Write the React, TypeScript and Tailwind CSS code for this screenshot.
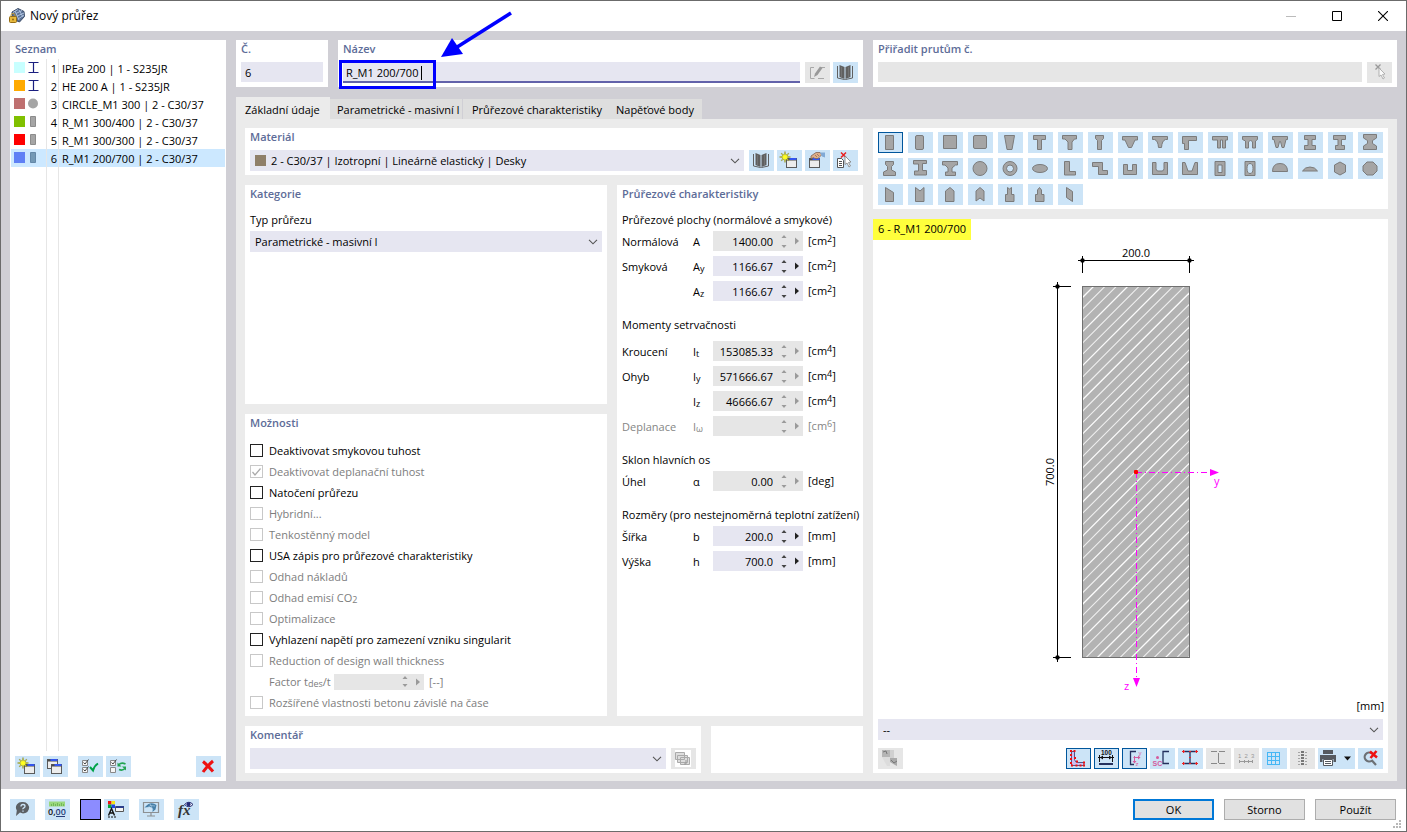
import React, { useId } from "react";
import type { ReactNode } from "react";

const G = { fill: "#a5a5a5", stroke: "#7b7b7b", strokeWidth: 1 };

const SHAPES: { name: string; d: string; evenOdd?: boolean }[] = [
  { name: "Obdélník", d: "M7.5 3.5h8v14h-8z" },
  { name: "Zaoblený obdélník", d: "M9 3.5h5q1.500 0 1.500 1.500v11q0 1.500-1.500 1.500h-5q-1.500 0-1.500-1.500v-11q0-1.500 1.500-1.500z" },
  { name: "Čtverec", d: "M5.500 3.500h13v13h-13z" },
  { name: "Zaoblený čtverec", d: "M7 3.500h10q1.500 0 1.500 1.500v10q0 1.500-1.500 1.500h-10q-1.500 0-1.500-1.500v-10q0-1.500 1.500-1.500z" },
  { name: "Lichoběžník", d: "M6.500 3.500h10l-2.500 14h-5z" },
  { name: "T průřez", d: "M5.500 3.500h12v4h-4v10h-4v-10h-4z" },
  { name: "T s náběhem", d: "M4.500 3.500h14v3.500h-2l-2.500 3v7.500h-4v-7.500l-3-3h-2.500z" },
  { name: "T úzký", d: "M7.500 3.500h8v3l-2 2v9h-4v-9l-2-2z" },
  { name: "T zkosený", d: "M4.500 4.500h15v3.500h-2.500l-3.500 7.500h-3l-3.500-7.500h-2.500z" },
  { name: "T zaoblený", d: "M4.500 4.500h15v3h-2q-3.500 1-4 8h-3q-.5-7-4-8h-2z" },
  { name: "L obrácený", d: "M4.500 4.500h14v4h-8v9h-4v-6h-2z" },
  { name: "TT", d: "M4.500 4.500h15v3.500h-2v8h-3v-8h-2v8h-3v-8h-5z" },
  { name: "TT s náběhem", d: "M4.500 4.500h15v3l-2 1.500v7h-3v-6l-2-2-2 2v6h-3v-7l-3-1.500z" },
  { name: "TT zkosený", d: "M4.500 4.500h15v3h-1.500l-2 8h-2l-1.500-6h-1l-1.500 6h-2l-2-8h-1.500z" },
  { name: "I průřez", d: "M6.500 3.500h11v4h-3.500v6h3.500v4h-11v-4h3.500v-6h-3.500z" },
  { name: "I nesymetrický", d: "M5.500 3.500h12v4h-4v6h3v4h-9v-4h2.500v-6h-4.500z" },
  { name: "I s náběhy", d: "M5.500 2.500h13v3.500l-4 2.500v3l4 2.500v3.500h-13v-3.500l4-2.500v-3l-4-2.500z" },
  { name: "I úzký nahoře", d: "M7.500 3.500h8v3l-2 2v3.500l4 2v3.500h-12v-3.500l4-2v-3.500l-2-2z" },
  { name: "I posunutý", d: "M5.500 2.500h13v3h-4v7h4v4.500h-12v-4h4v-7h-5z" },
  { name: "I s horním náběhem", d: "M4.500 3.500h15v3.500h-2l-3.500 3v4h3.500v3.500h-10v-3.500h2.500v-4l-3-3h-2.500z" },
  { name: "Kruh", d: "M5 10.500a7 7 0 1 1 14 0a7 7 0 1 1-14 0z" },
  { name: "Trubka", d: "M5 10.500a7 7 0 1 1 14 0a7 7 0 1 1-14 0zM8.500 10.500a3.500 3.500 0 1 0 7 0a3.500 3.500 0 1 0-7 0z", evenOdd: true },
  { name: "Elipsa", d: "M4.500 10.500a7.500 4 0 1 1 15 0a7.500 4 0 1 1-15 0z" },
  { name: "L průřez", d: "M6.500 3.500h5v10h6v3.500h-11z" },
  { name: "Z průřez", d: "M4.500 4.500h10v8h5v4h-9v-8h-6z" },
  { name: "U průřez", d: "M5.500 6.500h4v6h5v-6h4v10h-13z" },
  { name: "U zaoblený", d: "M4.500 4.500h3.500v6q0 2.500 2 2.500h4q2 0 2-2.500v-6h3.500v12h-15z" },
  { name: "U zkosený", d: "M4.500 4.500h2.500l3 8.500h4l3-8.500h2.500v12h-15z" },
  { name: "Dutý obdélník", d: "M7 3.500h10v14h-10zM10 7v7.500h4v-7.500z", evenOdd: true },
  { name: "Obdélník s otvorem", d: "M7 3.500h10v14h-10zM12 5.500q-3 0-3 5t3 5t3-5t-3-5z", evenOdd: true },
  { name: "Půlkruh", d: "M4.500 13.500q0-8 7.500-8t7.500 8z" },
  { name: "Kruhová úseč", d: "M4.500 13q2.500-4 7.500-4t7.500 4z" },
  { name: "Šestiúhelník", d: "M12 4l5.500 3v7l-5.500 3l-5.500-3v-7z" },
  { name: "Osmiúhelník", d: "M9 4h6l4 4v5l-4 4h-6l-4-4v-5z" },
  { name: "Šikmý obdélník", d: "M7.500 3.500l8 5v9h-8z" },
  { name: "Obdélník se zářezem", d: "M7.500 3.500l4.500 3.500l4-3.500v14h-8.500z" },
  { name: "Sedlový průřez", d: "M7.500 7l4.500-3.500l4 3.500v10.500h-8.500z" },
  { name: "Sedlový se zářezem", d: "M8 7l4-3.500l4 3.500v10l-4-3l-4 3z" },
  { name: "Odstupňovaný", d: "M9.500 3.500l2 1.500l2-1.500v7h2.500v7h-8.500v-7h2z" },
  { name: "Odstupňovaný sedlový", d: "M9.500 6l2-2.500l2 2.500v4.500h2.500v7h-8.500v-7h2z" },
  { name: "Rovnoběžník", d: "M8.500 3.500l6 4v10l-6-4z" },
];

function Svg({ children, w = 25, crisp = false }: { children: ReactNode; w?: number; crisp?: boolean }) {
  return (
    <svg width={w} height="21" viewBox={`0 0 ${w} 21`} fill="none" shapeRendering={crisp ? "crispEdges" : undefined} aria-hidden="true">
      {children}
    </svg>
  );
}

function Win({ x, y }: { x: number; y: number }) {
  return (
    <g>
      <rect x={x} y={y} width="10" height="9" fill="#ececec" stroke="#5a5a5a" />
      <path d={`M${x} ${y + 1}h10`} stroke="#4a4a4a" strokeWidth="2" />
      <path d={`M${x + 3} ${y + 0.5}h7`} stroke="#3355ee" strokeWidth="2" />
    </g>
  );
}

const star = "M8 1.500l.9 3.600l2.900-1.900l-1.700 2.900l3.400.9l-3.400.9l1.700 2.900l-2.900-1.700l-.9 3.400l-.9-3.400l-2.900 1.700l1.700-2.900l-3.400-.9l3.400-.9l-1.700-2.900l2.900 1.900z";

const ICONS = {
  edit: (
    <Svg>
      <path d="M9 5.500H5.500V16.500h4M13 16.500h6M16 5.500h4" stroke="#a8a8a8" />
      <path d="M9 15l1-3.500l5-7l2.500 1.500l-5 7z" fill="#999" />
    </Svg>
  ),
  book: (
    <Svg>
      <path d="M6.500 3l5 2v12l-5-2zM17.500 3l-5 2v12l5-2z" fill="#606060" />
      <path d="M4.500 4v12l7 1.500h1l7-1.500V4" stroke="#606060" />
      <path d="M8.500 5v10M15.500 5v10" stroke="#7d7d7d" strokeWidth=".6" />
    </Svg>
  ),
  create: (
    <Svg>
      <Win x={9.5} y={8.5} />
      <path d={star} fill="#ffff22" stroke="#8a8a33" strokeWidth=".6" />
    </Svg>
  ),
  modify: (
    <Svg>
      <Win x={4.5} y={8.5} />
      <path d="M6 6l5-3.500h4l2 2l-4 4h-3l-1-1l-3 1z" fill="#dfae88" stroke="#826554" strokeWidth=".8" />
      <path d="M15 2.500h5v5l-3-1z" fill="#80a9d6" />
      <path d="M10 5l2 2M12 4l2 2" stroke="#826554" strokeWidth=".7" />
    </Svg>
  ),
  pick: (
    <Svg>
      <path d="M4.500 8.500h4l2 2v7h-6zM6 11.500h3M6 13.500h3M6 15.500h3" fill="#fff" stroke="#555" />
      <path d="M8 2.500l5 5M13 2.500l-5 5" stroke="#e82020" strokeWidth="1.500" />
      <path d="M12 6l6 6l-2.500.5l2 3.500l-1.500 1l-2-4l-2 1.500z" fill="#fff" stroke="#888" strokeWidth=".9" />
    </Svg>
  ),
  pickOff: (
    <Svg>
      <path d="M8.500 2.500l5 5M13.500 2.500l-5 5" stroke="#999" strokeWidth="1.300" />
      <path d="M12 6l6 6l-2.500.5l2 3.500l-1.500 1l-2-4l-2 1.500z" fill="#fafafa" stroke="#aaa" strokeWidth=".9" />
    </Svg>
  ),
  copy: (
    <Svg>
      <Win x={4.5} y={3.5} />
      <Win x={8.5} y={8.5} />
    </Svg>
  ),
  checkAll: (
    <Svg>
      <path d="M4.500 4.500h5v5h-5zM4.500 11.500h5v5h-5z" fill="#f5f5f5" stroke="#888" />
      <path d="M5.500 6.500l1.500 1.500l3.500-4.500M5.500 13.500l1.500 1.500l3.500-4.500" stroke="#333" strokeWidth=".9" />
      <path d="M12 11l3 3.500q1.500-5 5-7" stroke="#00a348" strokeWidth="2" />
    </Svg>
  ),
  checkSwap: (
    <Svg>
      <path d="M4.500 4.500h5v5h-5zM4.500 11.500h5v5h-5z" fill="#f5f5f5" stroke="#888" />
      <path d="M5.500 6.500l1.500 1.500l3.500-4.500" stroke="#333" strokeWidth=".9" />
      <path d="M13 8.500q2.500-2.500 6.500-.5M19 12.500q-2.500 2.500-6 1" stroke="#22a352" strokeWidth="1.700" />
      <path d="M11.500 6.500v4h4zM20 14.500v-4h-4z" fill="#22a352" />
    </Svg>
  ),
  remove: (
    <Svg>
      <path d="M7 5.500q5 4 10 10M17 5q-5 4-10 11" stroke="#ee1111" strokeWidth="3" />
    </Svg>
  ),
  help: (
    <Svg>
      <path d="M13 3a6 5.700 0 1 1-3 10.600L6 17l.8-5.500A6 5.700 0 0 1 13 3z" fill="#5c6064" />
      <path d="M11 7.500q0-2 2-2t2 1.700q0 1-1.200 1.600t-.8 1.500M13 11.500v1.300" stroke="#cce4f7" strokeWidth="1.300" />
    </Svg>
  ),
  units: (
    <Svg>
      <path d="M4 2.500h16v5H4z" fill="#9ad87c" />
      <path d="M6.500 5v2M8.500 4v3M10.500 5v2M12.500 4v3M14.500 5v2M16.500 4v3M18.500 5v2" stroke="#68ad4e" strokeWidth=".8" />
      <text x="3" y="15.500" fontSize="9" fontWeight="600" fontFamily="Open Sans, sans-serif" fill="#111">0,<tspan fill="#263c78">00</tspan></text>
      <path d="M11 17.500h9" stroke="#263c78" />
    </Svg>
  ),
  display: (
    <Svg>
      <path d="M4 2h3.500v3.500H4z" fill="#ee1111" /><path d="M7.500 2H11v3.500H7.500z" fill="#f4e613" />
      <path d="M4 5.500h3.500V9H4z" fill="#00a53a" /><path d="M7.500 5.500H11V9H7.500z" fill="#1b44e4" />
      <path d="M4.500 16.500l3-7l3 7M5.500 14h4" stroke="#111" strokeWidth="1.400" />
      <path d="M4 18h8" stroke="#111" strokeDasharray="2 1" />
      <path d="M11.500 7.500h8v5h-8z" fill="#f5f5f5" stroke="#555" /><path d="M12 7h8v2h-8z" fill="#2c3f8c" />
    </Svg>
  ),
  monitor: (
    <Svg>
      <path d="M4.500 3.500h15v10h-15zM12 13.500v3M8 17h8" stroke="#8c8f92" strokeWidth="1.200" />
      <path d="M5.500 8.500q6-7 12-2.500l-1 4.500l-3 2.500q1-5-3-5z" fill="#477fa8" />
      <path d="M8 9q3-4 8-2M11 5l3 6" stroke="#b8d7ed" strokeWidth=".6" />
    </Svg>
  ),
  formula: (
    <Svg>
      <text x="4" y="16" fontSize="15" fontStyle="italic" fontWeight="700" fontFamily="Liberation Serif, serif" fill="#333">fx</text>
      <path d="M10.500 5.500q4.500-4.500 8.500 0q-4 4.500-8.500 0z" fill="#f4f6ff" stroke="#222a70" /><circle cx="14.500" cy="5.200" r="2" fill="#252a78" />
    </Svg>
  ),
  stack: (
    <Svg>
      <path d="M4 2h16v17H4z" fill="#fff" />
      <path d="M4.500 4.500h9v7h-9zM6.500 7.500h10v7h-10zM9.500 9.500h9v7h-9z" fill="#ddd" stroke="#aaa" />
      <path d="M15 12v4h-2" stroke="#999" />
    </Svg>
  ),
  material: (
    <Svg>
      <path d="M4 2h8v7H4z" fill="#b5b5b5" /><path d="M12 2h4v8H7V9h5z" fill="#d0d0d0" /><path d="M4 9h8v9H9z" fill="#dcdcdc" />
      <path d="M12 10h7v8l-2-1l-5-3z" fill="#aaa" /><path d="M5 4l3-1l1 3M13 12l3 3l3-2" stroke="#777" />
    </Svg>
  ),
  outline: (
    <Svg>
      <path d="M5.500 3.500h3v8q.5 3 3.500 3h6v3H5.500z" fill="#ccc0f2" stroke="#34386e" strokeWidth=".8" />
      <path d="M4 3h2M7.500 3h2M4 7h2M4 11h2M4 15h2M5 17.500h2M9.500 17.500h2M13.500 17.500h2M17 17.500h2M17 14.500h2M8 10h2M10 13.500h2" stroke="#ed1111" strokeWidth="2" />
    </Svg>
  ),
  dims: (
    <Svg>
      <text x="7" y="6.500" fontSize="6.500" fontWeight="700" fontFamily="Liberation Sans, sans-serif" fill="#111">100</text>
      <path d="M5.500 7v7M18.500 7v7M4 9.500h16" stroke="#111" /><path d="M6 9.500l3-2v4zM18 9.500l-3-2v4z" fill="#111" />
      <path d="M5 16h14" stroke="#24305d" strokeWidth="2" />
    </Svg>
  ),
  axes: (
    <Svg>
      <path d="M14 3.500H8.500v13H12" stroke="#24305d" strokeWidth="1.300" />
      <path d="M11.500 9.500h6M12.500 8v7" stroke="#d55a9c" /><path d="M16 7.500l2.500 2l-2.500 2zM10.500 13h4l-2 2.500z" fill="#d55a9c" />
      <text x="16.500" y="7" fontSize="6" fontFamily="Liberation Sans, sans-serif" fill="#d55a9c">y</text>
      <text x="13.500" y="18" fontSize="6" fontFamily="Liberation Sans, sans-serif" fill="#d55a9c">z</text>
    </Svg>
  ),
  shear: (
    <Svg>
      <path d="M19 3.500h-6v12h6" stroke="#24305d" strokeWidth="1.300" /><circle cx="7.500" cy="9.500" r="1.500" fill="#d55a9c" />
      <text x="2.500" y="17.500" fontSize="7" fontWeight="700" fontFamily="Liberation Sans, sans-serif" fill="#d55a9c">SC</text>
    </Svg>
  ),
  ibeam: (
    <Svg>
      <path d="M5 3.500h14M5 15.500h14M12 3.500v12" stroke="#24305d" strokeWidth="1.300" />
      <path d="M4 3.500h3M17 3.500h3M4 15.500h3M17 15.500h3M11 3.500h2M11 15.500h2M11 9.500h2M5.500 2v3M18.500 2v3M5.500 14v3M18.500 14v3" stroke="#ed2222" />
    </Svg>
  ),
  ibeamOff: (
    <Svg crisp>
      <path d="M5 3.500h6M13 3.500h6M5 15.500h6M13 15.500h6M12 4.500v10" stroke="#888" />
    </Svg>
  ),
  numbers: (
    <Svg>
      <text x="4" y="10" fontSize="6" fontFamily="Liberation Sans, sans-serif" fill="#999">1</text>
      <text x="10.500" y="10" fontSize="6" fontFamily="Liberation Sans, sans-serif" fill="#999">2</text>
      <text x="17" y="10" fontSize="6" fontFamily="Liberation Sans, sans-serif" fill="#999">3</text>
      <path d="M5 13.500h14M5.500 12v3M10.500 12v3M14.500 12v3M18.500 12v3" stroke="#999" />
    </Svg>
  ),
  grid: (
    <Svg crisp>
      <path d="M5.500 4.500h12v12h-12zM9.500 4.500v12M13.500 4.500v12M5.500 8.500h12M5.500 12.500h12" stroke="#45b7f5" />
    </Svg>
  ),
  points: (
    <Svg crisp>
      <path d="M12.500 3v15" stroke="#777" strokeWidth="3" strokeDasharray="2 1" />
      <path d="M8 4.500h2M8 7.500h2M8 10.500h2M8 13.500h2M8 16.500h2M15 4.500h2M15 7.500h2M15 10.500h2M15 13.500h2M15 16.500h2" stroke="#a5a5a5" />
    </Svg>
  ),
  print: (
    <Svg w={37}>
      <path d="M5 2h10v4H5zM2 7h16v7h-2.500V11h-11v3H2z" fill="#555a60" />
      <path d="M5.500 11.500h9v6h-9z" fill="#fff" stroke="#555a60" /><path d="M7 13.500h6M7 15.500h6" stroke="#555a60" />
      <path d="M26 8.500h7l-3.500 4z" fill="#111" />
    </Svg>
  ),
  zoomOff: (
    <Svg>
      <path d="M14 5.500a4.500 4.500 0 1 0 0 7M13.500 12l4.500 5" stroke="#6c7075" strokeWidth="2.200" />
      <path d="M12 3.500l7 6M18.500 3l-6 7" stroke="#ee1111" strokeWidth="2.500" />
    </Svg>
  ),
};

type IconName = keyof typeof ICONS;

function ToolButton({ icon, label, active = false, disabled = false, wide = false }: { icon: IconName; label: string; active?: boolean; disabled?: boolean; wide?: boolean }) {
  return (
    <button
      type="button"
      aria-label={label}
      disabled={disabled}
      className={`flex h-[21px] shrink-0 items-center justify-center ${wide ? "w-[37px]" : "w-[25px]"} ${disabled ? "bg-[#e6e6e6]" : "bg-[#cce4f7]"} ${active ? "outline outline-1 -outline-offset-1 outline-[#00569c]" : ""}`}
    >
      {ICONS[icon]}
    </button>
  );
}

function Card({ title, className = "", children }: { title?: string; className?: string; children?: ReactNode }) {
  return (
    <section className={`relative flex flex-col bg-white px-[5px] pb-1 ${className}`}>
      {title && <h2 className="h-[18px] shrink-0 text-[11px] leading-[18px] font-semibold text-[#5d6c98]">{title}</h2>}
      {children}
    </section>
  );
}

function Select({ label, value, swatch = false, className = "" }: { label: string; value: string; swatch?: boolean; className?: string }) {
  return (
    <div className={`relative flex h-[21px] items-center bg-[#e6e6f1] ${className}`}>
      {swatch && <span className="pointer-events-none absolute left-[5px] size-[11px] bg-[#8f7f69]" />}
      <select aria-label={label} className={`h-full w-full appearance-none bg-transparent pr-6 outline-none ${swatch ? "pl-[21px]" : "pl-[5px]"}`}>
        <option>{value}</option>
      </select>
      <svg className="pointer-events-none absolute right-1" width="10" height="6" viewBox="0 0 10 6" fill="none" stroke="#555" strokeWidth="1.100" aria-hidden="true">
        <path d="M1 .8l4 4l4-4" />
      </svg>
    </div>
  );
}

function Spinner({ id, value, off, className = "h-5" }: { id: string; value: string; off: boolean; className?: string }) {
  const c = off ? "#9a9a9a" : "#444444";
  return (
    <div className={`flex w-[90px] shrink-0 items-center ${off ? "bg-[#e6e6e6]" : "bg-[#e6e6f1]"} ${className}`}>
      <input id={id} type="text" defaultValue={value} readOnly={off} className="h-full w-[60px] shrink-0 bg-transparent text-right outline-none" />
      <span className="flex h-full w-[22px] shrink-0 flex-col items-center py-px">
        <button type="button" aria-label="Zvýšit" className="flex flex-1 items-center">
          <svg width="6" height="4" viewBox="0 0 6 4" aria-hidden="true"><path d="M3 0l2.500 3h-5z" fill={c} /></svg>
        </button>
        <button type="button" aria-label="Snížit" className="flex flex-1 items-center">
          <svg width="6" height="4" viewBox="0 0 6 4" aria-hidden="true"><path d="M3 4l2.500-3h-5z" fill={c} /></svg>
        </button>
      </span>
      <button type="button" aria-label="Možnosti hodnoty" className="flex h-full items-center">
        <svg width="5" height="8" viewBox="0 0 5 8" aria-hidden="true"><path d="M0 .5v7l4-3.500z" fill={off ? c : "#222222"} /></svg>
      </button>
    </div>
  );
}

function Sub({ children }: { children: ReactNode }) {
  return <sub className="-bottom-px text-[9px]">{children}</sub>;
}

function Sup({ children }: { children: ReactNode }) {
  return <sup className="-top-[3px] text-[9px]">{children}</sup>;
}

function PropRow({ label, sym, sub, value, unit, sup, off = true, muted = false }: { label: string; sym: string; sub?: string; value: string; unit: string; sup?: string; off?: boolean; muted?: boolean }) {
  const id = useId();
  return (
    <div className={`flex h-5 items-center ${muted ? "text-[#858585]" : ""}`}>
      <label htmlFor={id} className="flex w-[91px] shrink-0 pt-px">
        <span className="w-[71px]">{label}</span>
        <span>{sym}{sub && <Sub>{sub}</Sub>}</span>
      </label>
      <Spinner id={id} value={value} off={off} />
      <span className="pl-[5px]">[{unit}{sup && <Sup>{sup}</Sup>}]</span>
    </div>
  );
}

function Section({ title, spaced = false, children }: { title: string; spaced?: boolean; children: ReactNode }) {
  return (
    <div>
      <h3 className={`h-[21px] whitespace-nowrap leading-[20px] ${spaced ? "mb-[5px]" : ""}`}>{title}</h3>
      <div className="flex flex-col gap-[5px]">{children}</div>
    </div>
  );
}

function Check({ children, off = false, checked = false }: { children: ReactNode; off?: boolean; checked?: boolean }) {
  return (
    <label className={`relative flex h-[21px] items-center gap-[6px] ${off ? "text-[#7d7d7d]" : ""}`}>
      <input type="checkbox" defaultChecked={checked} disabled={off} className={`size-[13px] shrink-0 appearance-none border bg-white ${off ? "border-[#c8c8c8]" : "border-[#222222]"}`} />
      {checked && (
        <svg className="pointer-events-none absolute left-[2px]" width="9" height="8" viewBox="0 0 9 8" fill="none" stroke="#aaa" strokeWidth="1.200" aria-hidden="true">
          <path d="M.5 4l2.500 3l5.500-6.500" />
        </svg>
      )}
      <span className="pt-px">{children}</span>
    </label>
  );
}

const ITEMS = [
  { n: 1, text: "IPEa 200 | 1 - S235JR", color: "bg-[#c8ffff]", kind: "i" },
  { n: 2, text: "HE 200 A | 1 - S235JR", color: "bg-[#ffaa00]", kind: "i" },
  { n: 3, text: "CIRCLE_M1 300 | 2 - C30/37", color: "bg-[#bf7070]", kind: "c" },
  { n: 4, text: "R_M1 300/400 | 2 - C30/37", color: "bg-[#80c000]", kind: "r" },
  { n: 5, text: "R_M1 300/300 | 2 - C30/37", color: "bg-[#ff0000]", kind: "r" },
  { n: 6, text: "R_M1 200/700 | 2 - C30/37", color: "bg-[#5f80f5]", kind: "r" },
];

function ItemIcon({ kind, selected }: { kind: string; selected: boolean }) {
  return (
    <svg width="12" height="13" viewBox="0 0 12 13" fill="none" aria-hidden="true">
      {kind === "i" && <path d="M1.500 1.500h10M1.500 11.500h10M6.500 1.500v10" stroke="#1b1f80" strokeWidth="1.200" />}
      {kind === "c" && <circle cx="6" cy="6.500" r="5" fill="#a5a5a5" />}
      {kind === "r" && <path d="M3.500 1.500h5v10h-5z" fill={selected ? "#7499b6" : "#a5a5a5"} stroke={selected ? "#6488a8" : "#8c8c8c"} />}
    </svg>
  );
}

function SectionList() {
  return (
    <aside className="flex w-[216px] shrink-0 flex-col bg-white pb-1">
      <h2 className="h-[19px] pl-[5px] text-[11px] leading-[18px] font-semibold text-[#5d6c98]">Seznam</h2>
      <ul className="px-px">
        {ITEMS.map((it) => (
          <li key={it.n}>
            <button type="button" className={`flex h-[18px] w-full items-center text-left ${it.n === 6 ? "bg-[#cce8ff]" : ""}`}>
              <span className="flex h-full w-[35px] items-center gap-[2px] pb-px pl-[3px]">
                <span className={`size-[11px] ${it.color}`} />
                <ItemIcon kind={it.kind} selected={it.n === 6} />
              </span>
              <span className="h-full w-3 border-l border-[#e6e6e6] pt-px pr-px text-right leading-[18px]">{it.n}</span>
              <span className="h-full flex-1 border-l border-[#e6e6e6] pt-px pl-[3px] leading-[18px]">{it.text}</span>
            </button>
          </li>
        ))}
      </ul>
      <div className="flex flex-1 pl-9">
        <span className="w-3 border-l border-[#e6e6e6]" />
        <span className="border-l border-[#e6e6e6]" />
      </div>
      <div className="mt-[5px] flex gap-[3px] px-[5px]">
        <ToolButton icon="create" label="Nový" />
        <ToolButton icon="copy" label="Kopírovat" />
        <span className="w-1" />
        <ToolButton icon="checkAll" label="Vybrat vše" />
        <ToolButton icon="checkSwap" label="Obrátit výběr" />
        <span className="flex-1" />
        <ToolButton icon="remove" label="Odstranit" />
      </div>
    </aside>
  );
}

const HATCH = Array.from({ length: 42 }, (_, k) => 1380 + k * 11.36);

function Diagram() {
  return (
    <svg className="w-full flex-1" viewBox="873 240 515 457" role="img" aria-label="Průřez R_M1 200/700">
      <defs>
        <clipPath id="body"><rect x="1083" y="287" width="106" height="370" /></clipPath>
      </defs>
      <rect x="1082.500" y="286.500" width="107" height="371" fill="#b3b3b3" />
      <g clipPath="url(#body)" stroke="#fff">
        {HATCH.map((c, k) => (
          <line key={c} x1={c - 660} y1="660" x2={c - 280} y2="280" strokeWidth={k % 3 === 0 ? 1.3 : 1.1} opacity={k % 3 === 0 ? 0.95 : 0.8} />
        ))}
      </g>
      <rect x="1082.500" y="286.500" width="107" height="371" fill="none" stroke="#707070" />
      <g stroke="#000" shapeRendering="crispEdges">
        <path d="M1078 260.500h116M1082.500 256v17M1189.500 256v17M1057.500 282v380M1053 286.500h18M1053 657.500h18" />
      </g>
      <g fill="#000">
        <circle cx="1082.500" cy="260.500" r="2.200" /><circle cx="1189.500" cy="260.500" r="2.200" />
        <circle cx="1057.500" cy="286.500" r="2.200" /><circle cx="1057.500" cy="657.500" r="2.200" />
      </g>
      <g stroke="#ff00ff" strokeDasharray="6 3 1 3" shapeRendering="crispEdges">
        <path d="M1136 472.500h74" /><path d="M1136.500 472v206" />
      </g>
      <path d="M1210 469v7l9-3.500zM1133 678h7l-3.500 9z" fill="#ff00ff" />
      <rect x="1134" y="470" width="4" height="4" rx="1" fill="#ff0000" />
      <g fontSize="11">
        <text x="1136" y="257" textAnchor="middle">200.0</text>
        <text transform="translate(1054 472) rotate(-90)" textAnchor="middle">700.0</text>
        <text x="1214" y="485" fill="#ff00ff">y</text>
        <text x="1124" y="690" fill="#ff00ff">z</text>
      </g>
    </svg>
  );
}

export default function App() {
  return (
    <main className="flex min-h-screen flex-col border border-[#6b6b6b] bg-white font-['Open_Sans','Noto_Sans',sans-serif] text-[11px] leading-4 text-black">
      <header className="flex h-[30px] shrink-0 items-center pl-[7px]">
        <svg width="18" height="18" viewBox="0 0 18 18" aria-hidden="true">
          <path d="M4 5l6-3.500l6 3l.5 5l-5 5.500l-7-3z" fill="#597196" stroke="#3b4b66" />
          <path d="M5 5.500l5-3M8 6.500l6-3M9 9l7-3M10 12l6-4M7 4l4 9M11 3l4 7" stroke="#adc0dd" />
          <rect x="1.500" y="9.500" width="7" height="6" rx="1" fill="#e7b93e" stroke="#956c12" />
          <path d="M3 9V7.500q2-2.500 4 0V9" fill="none" stroke="#c39a33" />
          <circle cx="5" cy="12.500" r="1" fill="#906910" />
        </svg>
        <h1 className="pl-1 text-xs">Nový průřez</h1>
        <div className="ml-auto flex h-full">
          <button type="button" aria-label="Minimalizovat" className="flex w-[46px] items-center justify-center">
            <svg width="10" height="10" aria-hidden="true"><path d="M0 5.500h10" stroke="#bbb" /></svg>
          </button>
          <button type="button" aria-label="Maximalizovat" className="flex w-[46px] items-center justify-center">
            <svg width="10" height="10" aria-hidden="true"><path d="M.5.5h9v9h-9z" fill="none" stroke="#000" /></svg>
          </button>
          <button type="button" aria-label="Zavřít" className="flex w-[46px] items-center justify-center">
            <svg width="10" height="10" aria-hidden="true"><path d="M0 0l10 10M10 0l-10 10" stroke="#000" strokeWidth="1.100" /></svg>
          </button>
        </div>
      </header>

      <div className="flex flex-1 gap-[10px] bg-[#d0cfd5] px-[9px] pt-[9px] pb-2">
        <SectionList />

        <div className="flex min-w-0 flex-1 flex-col">
          <div className="flex gap-[10px]">
            <Card title="Č." className="w-[92px] shrink-0 gap-1">
              <input aria-label="Č." type="text" defaultValue="6" className="h-5 w-full bg-[#e6e6f1] px-1 pt-px outline-none" />
            </Card>
            <Card title="Název" className="w-[525px] shrink-0 gap-1">
              <div className="flex gap-[3px]">
                <div className="relative mr-[2px] flex-1">
                  <input aria-label="Název" type="text" defaultValue="R_M1 200/700" className="h-[21px] w-full border-b-2 border-[#6262aa] bg-[#e6e6f1] px-[3px] pt-[2px] outline-none" />
                  <span className="absolute top-1 left-[78px] h-[14px] w-px bg-black" />
                </div>
                <ToolButton icon="edit" label="Upravit název" disabled />
                <ToolButton icon="book" label="Knihovna průřezů" />
              </div>
              <div className="pointer-events-none absolute top-5 left-px h-[29px] w-[97px] border-[3px] border-[#0000ff]" />
              <svg className="pointer-events-none absolute -top-[30px] left-[102px]" width="74" height="50" viewBox="0 0 74 50" aria-hidden="true">
                <path d="M71 3L14 39" stroke="#0000ff" strokeWidth="3.500" />
                <path d="M1 47L12 28L23 44z" fill="#0000ff" />
              </svg>
            </Card>
            <Card title="Přiřadit prutům č." className="min-w-0 flex-1 gap-1">
              <div className="flex gap-[5px]">
                <input aria-label="Přiřadit prutům č." type="text" readOnly className="h-5 min-w-0 flex-1 bg-[#e6e6e6] outline-none" />
                <ToolButton icon="pickOff" label="Vybrat pruty" disabled />
              </div>
            </Card>
          </div>

          <nav role="tablist" className="mt-[10px] flex h-[22px] items-end">
            <button type="button" role="tab" aria-selected="true" className="h-[22px] w-[94px] bg-[#ebebeb] pt-1 pl-[9px] text-left">Základní údaje</button>
            <button type="button" role="tab" aria-selected="false" className="h-5 w-[133px] border-r border-[#d0cfd5] bg-[#dedede] pt-[2px] pl-[7px] text-left">Parametrické - masivní I</button>
            <button type="button" role="tab" aria-selected="false" className="h-5 w-[144px] bg-[#dedede] pt-[2px] pl-[9px] text-left">Průřezové charakteristiky</button>
            <button type="button" role="tab" aria-selected="false" className="h-5 w-[95px] bg-[#dedede] pt-[2px] pl-[9px] text-left">Napěťové body</button>
          </nav>

          <div className="flex flex-1 gap-[10px] bg-[#ebebeb] px-[9px] pt-[9px] pb-2">
            <div className="flex w-[618px] shrink-0 flex-col gap-[10px]">
              <Card title="Materiál" className="gap-1">
                <div className="flex gap-[3px]">
                  <Select label="Materiál" value="2 - C30/37 | Izotropní | Lineárně elastický | Desky" swatch className="mr-[2px] flex-1" />
                  <ToolButton icon="book" label="Knihovna materiálů" />
                  <ToolButton icon="create" label="Nový materiál" />
                  <ToolButton icon="modify" label="Upravit materiál" />
                  <ToolButton icon="pick" label="Převzít materiál" />
                </div>
              </Card>

              <div className="flex flex-1 gap-[10px]">
                <div className="flex w-[362px] shrink-0 flex-col gap-[10px]">
                  <Card title="Kategorie" className="flex-1">
                    <p className="mt-[7px] h-[21px] leading-[20px]">Typ průřezu</p>
                    <Select label="Typ průřezu" value="Parametrické - masivní I" />
                  </Card>
                  <Card title="Možnosti">
                    <div className="-mb-px mt-2 flex flex-col">
                      <Check>Deaktivovat smykovou tuhost</Check>
                      <Check off checked>Deaktivovat deplanační tuhost</Check>
                      <Check>Natočení průřezu</Check>
                      <Check off>Hybridní...</Check>
                      <Check off>Tenkostěnný model</Check>
                      <Check>USA zápis pro průřezové charakteristiky</Check>
                      <Check off>Odhad nákladů</Check>
                      <Check off>Odhad emisí CO<Sub>2</Sub></Check>
                      <Check off>Optimalizace</Check>
                      <Check>Vyhlazení napětí pro zamezení vzniku singularit</Check>
                      <Check off>Reduction of design wall thickness</Check>
                      <div className="flex h-[21px] items-center pl-[19px] text-[#7d7d7d]">
                        <label htmlFor="factor" className="w-[65px]">Factor t<Sub>des</Sub>/t</label>
                        <Spinner id="factor" value="" off className="h-4" />
                        <span className="pl-[5px]">[--]</span>
                      </div>
                      <Check off>Rozšířené vlastnosti betonu závislé na čase</Check>
                    </div>
                  </Card>
                </div>

                <Card title="Průřezové charakteristiky" className="min-w-0 flex-1">
                  <div className="mt-[7px] flex flex-col gap-[14px]">
                    <Section title="Průřezové plochy (normálové a smykové)">
                      <PropRow label="Normálová" sym="A" value="1400.00" unit="cm" sup="2" />
                      <PropRow label="Smyková" sym="A" sub="y" value="1166.67" unit="cm" sup="2" off={false} />
                      <PropRow label="" sym="A" sub="z" value="1166.67" unit="cm" sup="2" off={false} />
                    </Section>
                    <Section title="Momenty setrvačnosti" spaced>
                      <PropRow label="Kroucení" sym="I" sub="t" value="153085.33" unit="cm" sup="4" />
                      <PropRow label="Ohyb" sym="I" sub="y" value="571666.67" unit="cm" sup="4" />
                      <PropRow label="" sym="I" sub="z" value="46666.67" unit="cm" sup="4" />
                      <PropRow label="Deplanace" sym="I" sub="ω" value="" unit="cm" sup="6" muted />
                    </Section>
                    <Section title="Sklon hlavních os">
                      <PropRow label="Úhel" sym="α" value="0.00" unit="deg" />
                    </Section>
                    <Section title="Rozměry (pro nestejnoměrná teplotní zatížení)">
                      <PropRow label="Šířka" sym="b" value="200.0" unit="mm" off={false} />
                      <PropRow label="Výška" sym="h" value="700.0" unit="mm" off={false} />
                    </Section>
                  </div>
                </Card>
              </div>

              <div className="flex gap-[10px]">
                <Card title="Komentář" className="flex-1 gap-1">
                  <div className="flex gap-[5px]">
                    <Select label="Komentář" value="" className="flex-1" />
                    <ToolButton icon="stack" label="Komentáře" disabled />
                  </div>
                </Card>
                <Card className="w-[152px]" />
              </div>
            </div>

            <div className="flex min-w-0 flex-1 flex-col gap-[10px]">
              <div className="flex flex-wrap gap-[5px] bg-white px-[5px] py-1">
                {SHAPES.map((s, i) => (
                  <button
                    key={s.name}
                    type="button"
                    aria-label={s.name}
                    aria-pressed={i === 0}
                    className={`h-[21px] w-[25px] bg-[#cce4f7] ${i === 0 ? "outline outline-1 -outline-offset-1 outline-[#00569c]" : ""}`}
                  >
                    <Svg><path d={s.d} {...G} fillRule={s.evenOdd ? "evenodd" : undefined} /></Svg>
                  </button>
                ))}
              </div>

              <div className="flex flex-1 flex-col bg-white pb-1">
                <p className="h-[21px] w-[98px] bg-[#ffff3c] pl-[5px] leading-[20px]">6 - R_M1 200/700</p>
                <Diagram />
                <p className="pr-1 text-right leading-[17px]">[mm]</p>
                <div className="mt-[5px] flex flex-col gap-2 px-[5px]">
                  <Select label="Zobrazení" value="--" />
                  <div className="flex gap-[3px]">
                    <ToolButton icon="material" label="Materiál průřezu" disabled />
                    <span className="flex-1" />
                    <ToolButton icon="outline" label="Obrys" active />
                    <ToolButton icon="dims" label="Kóty" active />
                    <ToolButton icon="axes" label="Hlavní osy" active />
                    <ToolButton icon="shear" label="Střed smyku" />
                    <ToolButton icon="ibeam" label="Napěťové body" />
                    <ToolButton icon="ibeamOff" label="Části průřezu" disabled />
                    <ToolButton icon="numbers" label="Číslování" disabled />
                    <ToolButton icon="grid" label="Rastr" />
                    <ToolButton icon="points" label="Body" disabled />
                    <ToolButton icon="print" label="Tisk" wide />
                    <ToolButton icon="zoomOff" label="Zobrazit vše" />
                  </div>
                </div>
              </div>
            </div>
          </div>
        </div>
      </div>

      <footer className="relative flex h-[42px] shrink-0 items-center gap-[10px] pr-[10px] pb-[2px] pl-[9px]">
        <ToolButton icon="help" label="Nápověda" />
        <ToolButton icon="units" label="Jednotky" />
        <span className="flex gap-[3px]">
          <button type="button" aria-label="Barva" className="size-[21px] border border-black bg-[#8c8cff]" />
          <ToolButton icon="display" label="Vlastnosti zobrazení" />
        </span>
        <ToolButton icon="monitor" label="Pohled" />
        <ToolButton icon="formula" label="Vzorec" />
        <span className="flex-1" />
        <button type="button" className="h-[21px] w-[81px] border-2 border-[#0078d7] bg-[#e1e1e1] leading-[18px]">OK</button>
        <button type="button" className="h-[21px] w-[81px] border border-[#adadad] bg-[#e1e1e1] leading-[20px]">Storno</button>
        <button type="button" className="h-[21px] w-[81px] border border-[#adadad] bg-[#e1e1e1] leading-[20px]">Použít</button>
        <svg className="absolute right-1 bottom-[2px]" width="9" height="9" viewBox="0 0 9 9" fill="#b8b8b8" aria-hidden="true">
          <path d="M6 0h2v2H6zM3 3h2v2H3zM6 3h2v2H6zM0 6h2v2H0zM3 6h2v2H3zM6 6h2v2H6z" />
        </svg>
      </footer>
    </main>
  );
}
